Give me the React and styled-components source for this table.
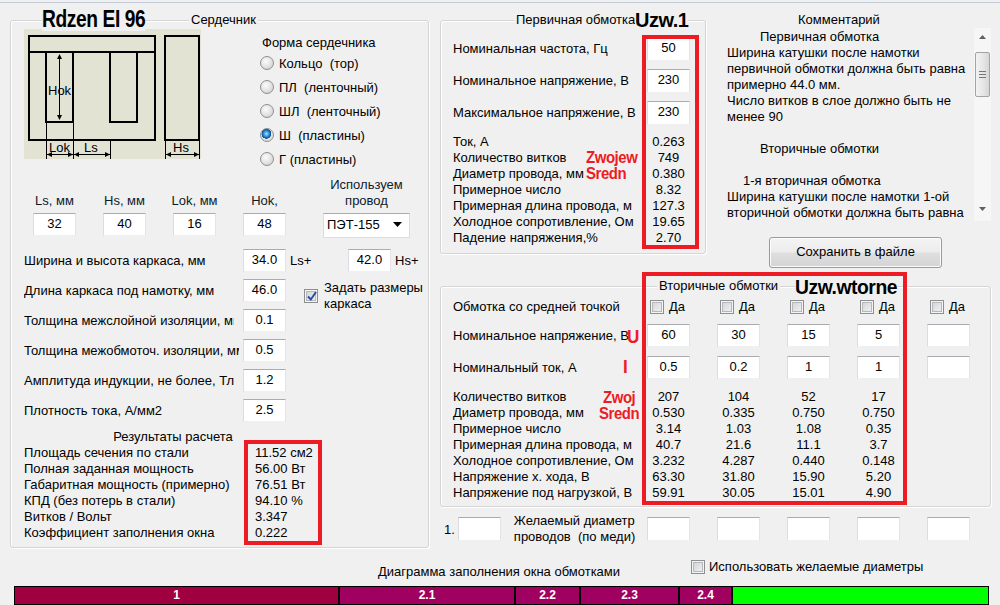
import styled, { createGlobalStyle } from 'styled-components';

const GlobalStyle = createGlobalStyle`
  html, body { margin: 0; padding: 0; background: #f0f0f0; }
  body {
    font-family: "Liberation Sans", Arial, sans-serif;
    font-size: 13px;
    color: #000;
  }
  * { box-sizing: border-box; }
`;

const RED = '#ed1c24';

const Window = styled.div`
  position: relative;
  width: 1000px;
  height: 605px;
  overflow: hidden;
  background: #f0f0f0;
`;

const TopRule = styled.div`
  height: 3px;
  border-bottom: 1px solid #c3cbd9;
`;

const MainRow = styled.div`
  display: flex;
  align-items: flex-start;
  height: 545px;
  margin-top: 9px;
  padding-left: 10px;
`;

const GroupBox = styled.div`
  position: relative;
  flex: none;
  width: ${(p) => p.$w}px;
  height: ${(p) => p.$h}px;
  margin-top: ${(p) => p.$top || 0}px;
  border: 1px solid #d5d5d5;
  border-radius: 3px;
  box-shadow: inset 1px 1px 0 #fff, 1px 1px 0 #fff;
  padding: ${(p) => p.$pad};
`;

const Caption = styled.span`
  position: absolute;
  top: -9px;
  left: ${(p) => p.$left}px;
  padding: 0 2px;
  line-height: 16px;
  background: #f0f0f0;
`;

/* ---------- left panel ---------- */

const TopSection = styled.div`
  display: flex;
  height: 148px;
`;

const RadioGroup = styled.div`
  margin: 6px 0 0 57px;
`;

const GroupTitle = styled.div`
  line-height: 16px;
  padding-left: 4px;
`;

const RadioRow = styled.div`
  display: flex;
  align-items: center;
  height: 24px;
  padding-left: 2px;
  gap: 5px;
  white-space: pre;
`;

const Radio = styled.span`
  width: 14px;
  height: 14px;
  border-radius: 50%;
  border: 1px solid #8e8f8f;
  background: ${(p) =>
    p.$on
      ? 'radial-gradient(circle at 45% 40%, #9fe6ff 0, #2a8ad6 30%, #0b4a8a 48%, #e6e6e6 52%, #cfcfcf 100%)'
      : 'radial-gradient(circle at 40% 35%, #fbfbfb 0, #e4e4e4 50%, #c8c8c8 100%)'};
`;

const DimRow = styled.div`
  display: grid;
  grid-template-columns: 70px 70px 70px 80px 87px;
  margin-left: 9px;
`;

const DimCell = styled.div`
  display: flex;
  flex-direction: column;
  align-items: center;
  width: ${(p) => p.$w}px;
  gap: 4px;
`;

const DimLabel = styled.div`
  height: 32px;
  display: flex;
  flex-direction: column;
  justify-content: flex-end;
  align-items: center;
  line-height: 16px;
  white-space: nowrap;
  color: #0e1a2b;
`;

const Field = styled.div`
  flex: none;
  width: ${(p) => p.$w || 43}px;
  height: ${(p) => p.$h || 23}px;
  background: #fff;
  border: 1px solid;
  border-color: #a9abb0 #e3e4e8 #eef0f3 #dcdde2;
  text-align: center;
  line-height: ${(p) => (p.$h || 23) - 4}px;
`;

const Select = styled.div`
  display: flex;
  align-items: center;
  justify-content: space-between;
  width: 87px;
  height: 25px;
  padding: 0 7px 2px 3px;
  background: #fff;
  border: 1px solid;
  border-color: #a9abb0 #dcdde2 #dcdde2 #dcdde2;
`;

const ParamList = styled.div`
  margin-top: 11px;
  display: flex;
  flex-direction: column;
  gap: 7px;
`;

const ParamRow = styled.div`
  display: grid;
  grid-template-columns: 219px 43px auto;
  grid-template-rows: 23px;
  align-items: center;
  height: 23px;
`;

const ParamLabel = styled.div`
  width: ${(p) => p.$clip || 219}px;
  overflow: hidden;
  white-space: nowrap;
`;

const Extra = styled.div`
  display: flex;
  align-items: center;
  align-self: ${(p) => (p.$top ? 'start' : 'center')};
  margin-top: ${(p) => (p.$top ? 1 : 0)}px;
  padding-left: ${(p) => p.$indent || 0}px;
`;

const Suffix = styled.span`
  padding-left: 4px;
  ${(p) => (p.$w ? `width: ${p.$w}px;` : '')}
`;

const CheckLabel = styled.div`
  margin-left: 6px;
  line-height: 16px;
`;

const Check = styled.span`
  position: relative;
  flex: none;
  width: 14px;
  height: 14px;
  margin-left: ${(p) => p.$ml || 0}px;
  border: 1px solid #8f8f8f;
  background: linear-gradient(135deg, #cdd0d4 0%, #f5f5f5 100%);
  box-shadow: inset 0 0 0 1px #f4f4f4, inset 0 0 0 2px #b5b8bd;
  svg { position: absolute; left: 1px; top: 0; }
`;

const ResultsTitle = styled.div`
  width: 298px;
  margin-top: 7px;
  text-align: center;
  line-height: 16px;
`;

const TwoCol = styled.div`
  display: grid;
  grid-template-columns: ${(p) => p.$cols};
  align-items: center;
  line-height: 16px;
  white-space: nowrap;
`;

const Centered = styled.span`
  width: 43px;
  text-align: center;
`;

/* ---------- right area ---------- */

const RightArea = styled.div`
  display: flex;
  flex-direction: column;
  width: 551px;
  margin-left: 11px;
`;

const TopRow = styled.div`
  display: flex;
  align-items: flex-start;
  height: 256px;
`;

const FieldStack = styled.div`
  display: flex;
  flex-direction: column;
  gap: 8px;
  margin-bottom: 9px;
`;

const CommentCol = styled.div`
  display: flex;
  flex-direction: column;
  width: 271px;
  margin-left: 14px;
`;

const CommentTitle = styled.div`
  padding-left: 78px;
  line-height: 16px;
`;

const CommentBox = styled.div`
  display: flex;
  height: 193px;
  margin-left: 2px;
`;

const CommentText = styled.div`
  flex: 1;
  padding: 1px 0 0 5px;
  overflow: hidden;
  white-space: nowrap;
  line-height: 16px;
`;

const CommentLine = styled.div`
  height: 16px;
  padding-left: ${(p) => p.$indent || 0}px;
`;

const ScrollBar = styled.div`
  display: flex;
  flex-direction: column;
  align-items: center;
  width: 17px;
  background: #f6f6f6;
`;

const ScrollArrow = styled.div`
  display: flex;
  align-items: center;
  justify-content: center;
  width: 17px;
  height: ${(p) => p.$h}px;
`;

const ScrollThumb = styled.div`
  display: flex;
  flex-direction: column;
  align-items: center;
  justify-content: center;
  gap: 2px;
  width: 15px;
  height: 45px;
  margin-top: 6px;
  border: 1px solid #a3a3a3;
  border-radius: 2px;
  background: linear-gradient(90deg, #f2f2f2 0%, #e6e6e6 55%, #d6d6d6 100%);
  span { width: 7px; height: 1px; background: #777; }
`;

const ScrollTrack = styled.div`
  flex: 1;
`;

const SaveButton = styled.div`
  width: 173px;
  height: 31px;
  margin: 16px 0 0 49px;
  border: 1px solid #9a9a9a;
  border-radius: 3px;
  background: linear-gradient(#f4f4f4 0%, #ececec 48%, #dfdfdf 52%, #d4d4d4 100%);
  box-shadow: inset 0 0 0 1px #fcfcfc;
  text-align: center;
  line-height: 28px;
`;

const SecRow = styled.div`
  display: grid;
  grid-template-columns: 194px repeat(5, 70px);
  grid-template-rows: ${(p) => p.$h}px;
  align-items: center;
  height: ${(p) => p.$h}px;
  margin-top: ${(p) => p.$mt || 0}px;
  line-height: 16px;
  white-space: nowrap;
`;

const SecValues = styled.div`
  margin-top: 10px;
`;

const CheckCell = styled.div`
  display: flex;
  align-items: center;
  gap: 5px;
`;

const DesiredRow = styled.div`
  display: grid;
  grid-template-columns: 207px repeat(5, 70px);
  align-items: center;
  height: 32px;
  margin-top: 6px;
`;

const DesiredFirst = styled.div`
  display: flex;
  align-items: center;
  padding-left: 4px;
`;

const RowNumber = styled.span`
  margin-right: 3px;
`;

const DesiredLabel = styled.div`
  margin-left: 13px;
  line-height: 16px;
  white-space: pre;
`;

/* ---------- bottom ---------- */

const BottomStrip = styled.div`
  display: flex;
  align-items: flex-start;
  height: 29px;
  padding-left: 378px;
`;

const DiagramLabel = styled.div`
  width: 313px;
  margin-top: 7px;
  line-height: 16px;
`;

const StripCheck = styled.div`
  display: flex;
  align-items: center;
  gap: 4px;
  margin-top: 2px;
  line-height: 16px;
`;

const Bar = styled.div`
  display: flex;
  width: 975px;
  height: 19px;
  margin-left: 14px;
  border: 1px solid #000;
`;

const Segment = styled.div`
  flex: ${(p) => (p.$w ? 'none' : '1')};
  width: ${(p) => (p.$w ? `${p.$w}px` : 'auto')};
  background: ${(p) => p.$bg};
  border-right: ${(p) => (p.$last ? 'none' : '2px solid #000')};
  color: #fff;
  font-weight: bold;
  font-size: 12px;
  line-height: 17px;
  text-align: center;
`;

/* ---------- overlays (paint annotations) ---------- */

const RedBox = styled.div`
  position: absolute;
  left: ${(p) => p.$x}px;
  top: ${(p) => p.$y}px;
  width: ${(p) => p.$w}px;
  height: ${(p) => p.$h}px;
  border: 4px solid ${RED};
  pointer-events: none;
`;

const Note = styled.div`
  position: absolute;
  left: ${(p) => p.$x}px;
  top: ${(p) => p.$y}px;
  font-family: "Liberation Sans", Arial, sans-serif;
  font-weight: bold;
  font-size: ${(p) => p.$size}px;
  line-height: ${(p) => (p.$lh ? `${p.$lh}px` : 1)};
  letter-spacing: -0.5px;
  color: ${(p) => (p.$red ? RED : '#000')};
  background: ${(p) => (p.$red ? 'transparent' : '#f0f0f0')};
  white-space: pre;
  transform: scaleX(${(p) => p.$sx || 1});
  transform-origin: left center;
`;

const CheckMark = () => (
  <svg width="12" height="12" viewBox="0 0 12 12">
    <path d="M2 6.5 L4.8 9.5 L10 2" fill="none" stroke="#2b4f9e" strokeWidth="2" />
  </svg>
);

const Arrow = ({ up }) => (
  <svg width="7" height="4" viewBox="0 0 7 4">
    <path d={up ? 'M0 4 L3.5 0 L7 4 Z' : 'M0 0 L3.5 4 L7 0 Z'} fill="#606060" />
  </svg>
);

function CoreDiagram() {
  const head = (x, y, dir) => {
    const d = {
      up: `M${x} ${y} l-2.5 5 h5 z`,
      down: `M${x} ${y} l-2.5 -5 h5 z`,
      left: `M${x} ${y} l5 -2.5 v5 z`,
      right: `M${x} ${y} l-5 -2.5 v5 z`,
    }[dir];
    return <path d={d} fill="#000" />;
  };
  return (
    <svg width="177" height="130" viewBox="0 0 177 130" style={{ flex: 'none' }}>
      <rect width="177" height="130" fill="#e3e3d4" />
      <g fill="none" stroke="#000" strokeWidth="2">
        <rect x="5" y="7" width="126" height="104" />
        <line x1="5" y1="23" x2="131" y2="23" />
        <polyline points="22,23 22,93 49,93 49,23" />
        <polyline points="86,23 86,93 113,93 113,23" />
        <rect x="141" y="7" width="34" height="104" />
      </g>
      <g stroke="#000" strokeWidth="1">
        <line x1="35.5" y1="27" x2="35.5" y2="90" />
        <line x1="22.5" y1="94" x2="22.5" y2="130" />
        <line x1="49.5" y1="94" x2="49.5" y2="130" />
        <line x1="86.5" y1="112" x2="86.5" y2="130" />
        <line x1="141.5" y1="112" x2="141.5" y2="130" />
        <line x1="175.5" y1="112" x2="175.5" y2="130" />
        <line x1="23" y1="125.5" x2="86" y2="125.5" />
        <line x1="142" y1="125.5" x2="175" y2="125.5" />
      </g>
      {head(35.5, 25, 'up')}
      {head(35.5, 91, 'down')}
      {head(23, 125.5, 'left')}
      {head(49, 125.5, 'right')}
      {head(50, 125.5, 'left')}
      {head(86, 125.5, 'right')}
      {head(142, 125.5, 'left')}
      {head(175, 125.5, 'right')}
      <g fontFamily='"Liberation Sans", Arial, sans-serif' fontSize="13" fill="#000">
        <text x="24" y="66">Hok</text>
        <text x="25" y="123">Lok</text>
        <text x="60" y="123">Ls</text>
        <text x="149" y="123">Hs</text>
      </g>
    </svg>
  );
}

const radios = [
  ['Кольцо  (тор)', false],
  ['ПЛ  (ленточный)', false],
  ['ШЛ  (ленточный)', false],
  ['Ш  (пластины)', true],
  ['Г (пластины)', false],
];

const dims = [
  ['Ls, мм', '32'],
  ['Hs, мм', '40'],
  ['Lok, мм', '16'],
  ['Hok,', '48'],
];

const params = [
  ['Толщина межслойной изоляции, мм', '0.1', 210],
  ['Толщина межобмоточ. изоляции, мм', '0.5', 215],
  ['Амплитуда индукции, не более, Тл', '1.2'],
  ['Плотность тока, А/мм2', '2.5'],
];

const results = [
  ['Площадь сечения по стали', '11.52 см2'],
  ['Полная заданная мощность', '56.00 Вт'],
  ['Габаритная мощность (примерно)', '76.51 Вт'],
  ['КПД (без потерь в стали)', '94.10 %'],
  ['Витков / Вольт', '3.347'],
  ['Коэффициент заполнения окна', '0.222'],
];

const primaryInputs = [
  ['Номинальная частота, Гц', '50'],
  ['Номинальное напряжение, В', '230'],
  ['Максимальное напряжение, В', '230'],
];

const primaryValues = [
  ['Ток, А', '0.263'],
  ['Количество витков', '749'],
  ['Диаметр провода, мм', '0.380'],
  ['Примерное число', '8.32'],
  ['Примерная длина провода, м', '127.3'],
  ['Холодное сопротивление, Ом', '19.65'],
  ['Падение напряжения,%', '2.70'],
];

const comments = [
  ['Первичная обмотка', 33],
  ['Ширина катушки после намотки', 0],
  ['первичной обмотки должна быть равна', 0],
  ['примерно 44.0 мм.', 0],
  ['Число витков в слое должно быть не', 0],
  ['менее 90', 0],
  ['', 0],
  ['Вторичные обмотки', 33],
  ['', 0],
  ['1-я вторичная обмотка', 16],
  ['Ширина катушки после намотки 1-ой', 0],
  ['вторичной обмотки должна быть равна', 0],
];

const secValues = [
  ['Количество витков', ['207', '104', '52', '17']],
  ['Диаметр провода, мм', ['0.530', '0.335', '0.750', '0.750']],
  ['Примерное число', ['3.14', '1.03', '1.08', '0.35']],
  ['Примерная длина провода, м', ['40.7', '21.6', '11.1', '3.7']],
  ['Холодное сопротивление, Ом', ['3.232', '4.287', '0.440', '0.148']],
  ['Напряжение х. хода, В', ['63.30', '31.80', '15.90', '5.20']],
  ['Напряжение под нагрузкой, В', ['59.91', '30.05', '15.01', '4.90']],
];

const segments = [
  ['1', 325, '#a0003f'],
  ['2.1', 176, '#a0005f'],
  ['2.2', 65, '#a0005f'],
  ['2.3', 99, '#a0005f'],
  ['2.4', 53, '#a0005f'],
];

export default function App() {
  return (
    <Window>
      <GlobalStyle />
      <TopRule />
      <MainRow>
        <GroupBox $w={419} $h={528} $top={8} $pad="8px 0 0 13px">
          <Caption $left={178}>Сердечник</Caption>
          <TopSection>
            <CoreDiagram />
            <RadioGroup>
              <GroupTitle>Форма сердечника</GroupTitle>
              {radios.map(([t, on]) => (
                <RadioRow key={t}>
                  <Radio $on={on} />
                  {t}
                </RadioRow>
              ))}
            </RadioGroup>
          </TopSection>

          <DimRow>
            {dims.map(([l, v]) => (
              <DimCell key={l} $w={43}>
                <DimLabel>{l}</DimLabel>
                <Field>{v}</Field>
              </DimCell>
            ))}
            <DimCell $w={87}>
              <DimLabel>
                <span>Используем</span>
                <span>провод</span>
              </DimLabel>
              <Select>
                ПЭТ-155
                <svg width="9" height="5" viewBox="0 0 9 5">
                  <path d="M0 0 L4.5 5 L9 0 Z" fill="#000" />
                </svg>
              </Select>
            </DimCell>
          </DimRow>

          <ParamList>
            <ParamRow>
              <ParamLabel>Ширина и высота каркаса, мм</ParamLabel>
              <Field>34.0</Field>
              <Extra>
                <Suffix $w={62}>Ls+</Suffix>
                <Field>42.0</Field>
                <Suffix>Hs+</Suffix>
              </Extra>
            </ParamRow>
            <ParamRow>
              <ParamLabel>Длина каркаса под намотку, мм</ParamLabel>
              <Field>46.0</Field>
              <Extra $top $indent={18}>
                <Check>
                  <CheckMark />
                </Check>
                <CheckLabel>
                  Задать размеры
                  <br />
                  каркаса
                </CheckLabel>
              </Extra>
            </ParamRow>
            {params.map(([l, v, clip]) => (
              <ParamRow key={l}>
                <ParamLabel $clip={clip}>{l}</ParamLabel>
                <Field>{v}</Field>
              </ParamRow>
            ))}
          </ParamList>

          <ResultsTitle>Результаты расчета</ResultsTitle>
          {results.map(([l, v]) => (
            <TwoCol key={l} $cols="231px auto">
              <span>{l}</span>
              <span>{v}</span>
            </TwoCol>
          ))}
        </GroupBox>

        <RightArea>
          <TopRow>
            <GroupBox $w={266} $h={234} $top={8} $pad="16px 0 0 12px">
              <Caption $left={73}>Первичная обмотка</Caption>
              <FieldStack>
                {primaryInputs.map(([l, v]) => (
                  <TwoCol key={l} $cols="194px 43px">
                    <span>{l}</span>
                    <Field $h={24}>{v}</Field>
                  </TwoCol>
                ))}
              </FieldStack>
              {primaryValues.map(([l, v]) => (
                <TwoCol key={l} $cols="194px 43px">
                  <span>{l}</span>
                  <Centered>{v}</Centered>
                </TwoCol>
              ))}
            </GroupBox>

            <CommentCol>
              <CommentTitle>Комментарий</CommentTitle>
              <CommentBox>
                <CommentText>
                  {comments.map(([t, ind], i) => (
                    <CommentLine key={i} $indent={ind}>
                      {t}
                    </CommentLine>
                  ))}
                </CommentText>
                <ScrollBar>
                  <ScrollArrow $h={18}>
                    <Arrow up />
                  </ScrollArrow>
                  <ScrollThumb>
                    <span />
                    <span />
                    <span />
                  </ScrollThumb>
                  <ScrollTrack />
                  <ScrollArrow $h={24}>
                    <Arrow />
                  </ScrollArrow>
                </ScrollBar>
              </CommentBox>
              <SaveButton>Сохранить в файле</SaveButton>
            </CommentCol>
          </TopRow>

          <GroupBox $w={551} $h={221} $top={18} $pad="12px 0 0 12px">
            <Caption $left={216}>Вторичные обмотки</Caption>
            <SecRow $h={16}>
              <span>Обмотка со средней точкой</span>
              {[0, 1, 2, 3, 4].map((i) => (
                <CheckCell key={i}>
                  <Check $ml={3} />
                  Да
                </CheckCell>
              ))}
            </SecRow>
            <SecRow $h={23} $mt={9}>
              <span>Номинальное напряжение, В</span>
              {['60', '30', '15', '5', ''].map((v, i) => (
                <Field key={i}>{v}</Field>
              ))}
            </SecRow>
            <SecRow $h={23} $mt={9}>
              <span>Номинальный ток, А</span>
              {['0.5', '0.2', '1', '1', ''].map((v, i) => (
                <Field key={i}>{v}</Field>
              ))}
            </SecRow>
            <SecValues>
              {secValues.map(([l, vals]) => (
                <SecRow key={l} $h={16}>
                  <span>{l}</span>
                  {vals.map((v, i) => (
                    <Centered key={i}>{v}</Centered>
                  ))}
                </SecRow>
              ))}
            </SecValues>
          </GroupBox>

          <DesiredRow>
            <DesiredFirst>
              <RowNumber>1.</RowNumber>
              <Field $h={24} />
              <DesiredLabel>{'Желаемый диаметр\nпроводов  (по меди)'}</DesiredLabel>
            </DesiredFirst>
            {[0, 1, 2, 3, 4].map((i) => (
              <Field key={i} $h={24} />
            ))}
          </DesiredRow>
        </RightArea>
      </MainRow>

      <BottomStrip>
        <DiagramLabel>Диаграмма заполнения окна обмотками</DiagramLabel>
        <StripCheck>
          <Check />
          Использовать желаемые диаметры
        </StripCheck>
      </BottomStrip>

      <Bar>
        {segments.map(([t, w, bg]) => (
          <Segment key={t} $w={w} $bg={bg}>
            {t}
          </Segment>
        ))}
        <Segment $bg="#00ff00" $last />
      </Bar>

      <RedBox $x={244} $y={440} $w={78} $h={105} />
      <RedBox $x={642} $y={35} $w={57} $h={214} />
      <RedBox $x={642} $y={272} $w={265} $h={233} />
      <Note $x={42} $y={7} $size={24} $sx={0.8}>Rdzen EI 96</Note>
      <Note $x={635} $y={9} $size={21} $sx={0.95}>Uzw.1</Note>
      <Note $x={795} $y={276} $size={21} $sx={0.92}>Uzw.wtorne</Note>
      <Note $x={586} $y={150} $size={17} $lh={16} $sx={0.88} $red>
        {'Zwojew\nSredn'}
      </Note>
      <Note $x={603} $y={390} $size={17} $lh={16} $sx={0.88} $red>Zwoj</Note>
      <Note $x={599} $y={406} $size={17} $lh={16} $sx={0.88} $red>Sredn</Note>
      <Note $x={627} $y={327} $size={19} $sx={0.9} $red>U</Note>
      <Note $x={623} $y={357} $size={19} $sx={0.9} $red>I</Note>
    </Window>
  );
}
